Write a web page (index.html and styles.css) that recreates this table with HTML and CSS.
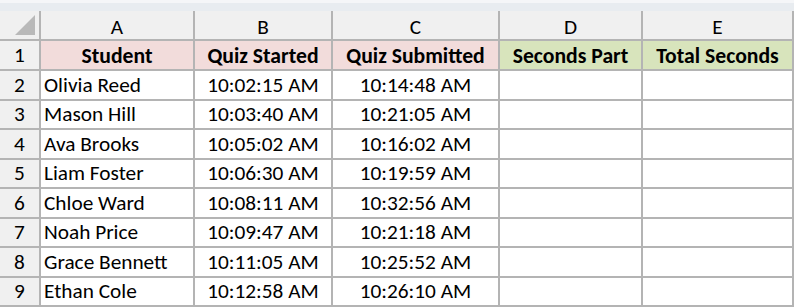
FILE: index.html
```html
<!DOCTYPE html>
<html>
<head>
<meta charset="utf-8">
<link rel="stylesheet" href="styles.css">
</head>
<body>
<div class="band"></div>
<div class="sheet">
  <div class="corner"><span class="tri"></span></div>
  <div class="colh">A</div>
  <div class="colh">B</div>
  <div class="colh">C</div>
  <div class="colh">D</div>
  <div class="colh">E</div>

  <div class="rowh">1</div>
  <div class="cell hd pink">Student</div>
  <div class="cell hd pink">Quiz Started</div>
  <div class="cell hd pink">Quiz Submitted</div>
  <div class="cell hd green">Seconds Part</div>
  <div class="cell hd green">Total Seconds</div>

  <div class="rowh">2</div><div class="cell name">Olivia Reed</div><div class="cell t">10:02:15 AM</div><div class="cell t">10:14:48 AM</div><div class="cell"></div><div class="cell"></div>
  <div class="rowh">3</div><div class="cell name">Mason Hill</div><div class="cell t">10:03:40 AM</div><div class="cell t">10:21:05 AM</div><div class="cell"></div><div class="cell"></div>
  <div class="rowh">4</div><div class="cell name">Ava Brooks</div><div class="cell t">10:05:02 AM</div><div class="cell t">10:16:02 AM</div><div class="cell"></div><div class="cell"></div>
  <div class="rowh">5</div><div class="cell name">Liam Foster</div><div class="cell t">10:06:30 AM</div><div class="cell t">10:19:59 AM</div><div class="cell"></div><div class="cell"></div>
  <div class="rowh">6</div><div class="cell name">Chloe Ward</div><div class="cell t">10:08:11 AM</div><div class="cell t">10:32:56 AM</div><div class="cell"></div><div class="cell"></div>
  <div class="rowh">7</div><div class="cell name">Noah Price</div><div class="cell t">10:09:47 AM</div><div class="cell t">10:21:18 AM</div><div class="cell"></div><div class="cell"></div>
  <div class="rowh">8</div><div class="cell name">Grace Bennett</div><div class="cell t">10:11:05 AM</div><div class="cell t">10:25:52 AM</div><div class="cell"></div><div class="cell"></div>
  <div class="rowh">9</div><div class="cell name">Ethan Cole</div><div class="cell t">10:12:58 AM</div><div class="cell t">10:26:10 AM</div><div class="cell"></div><div class="cell"></div>
</div>
</body>
</html>
```
FILE: styles.css
```css
html, body {
  margin: 0;
  padding: 0;
  background: #ffffff;
  overflow: hidden;
}
body {
  width: 794px;
  height: 307px;
  font-family: Carlito, Lato, "Liberation Sans", sans-serif;
  font-size: 21.3px;
  color: #000;
}
.band {
  height: 11px;
  background: #e8ecf0;
  border-top: 3px solid #f5f6f8;
  box-sizing: border-box;
}
.sheet {
  display: grid;
  grid-template-columns: 39px 152px 136px 165px 141px 149px;
  grid-template-rows: 28px 28px repeat(8, 27.5px);
  gap: 2px;
  padding: 0 2px 2px 0;
  background: #b4b4b4;
  width: 794px;
  box-sizing: border-box;
}
.corner {
  background: #f0f0f0;
  position: relative;
}
.tri {
  position: absolute;
  right: 4px;
  bottom: 4px;
  width: 0;
  height: 0;
  border-left: 20px solid transparent;
  border-bottom: 20px solid #b9b9b9;
}
.colh {
  background: #f0f0f0;
  display: flex;
  align-items: center;
  justify-content: center;
  padding-top: 3px;
  box-sizing: border-box;
}
.rowh {
  background: #f0f0f0;
  display: flex;
  align-items: center;
  justify-content: center;
}
.cell {
  background: #ffffff;
  display: flex;
  align-items: center;
  justify-content: center;
  white-space: nowrap;
}
.cell.name {
  justify-content: flex-start;
  padding-left: 3px;
}
.hd {
  font-weight: bold;
  font-size: 21.7px;
}
.pink {
  background: #f2dcdb;
}
.green {
  background: #d8e4bc;
}
```
